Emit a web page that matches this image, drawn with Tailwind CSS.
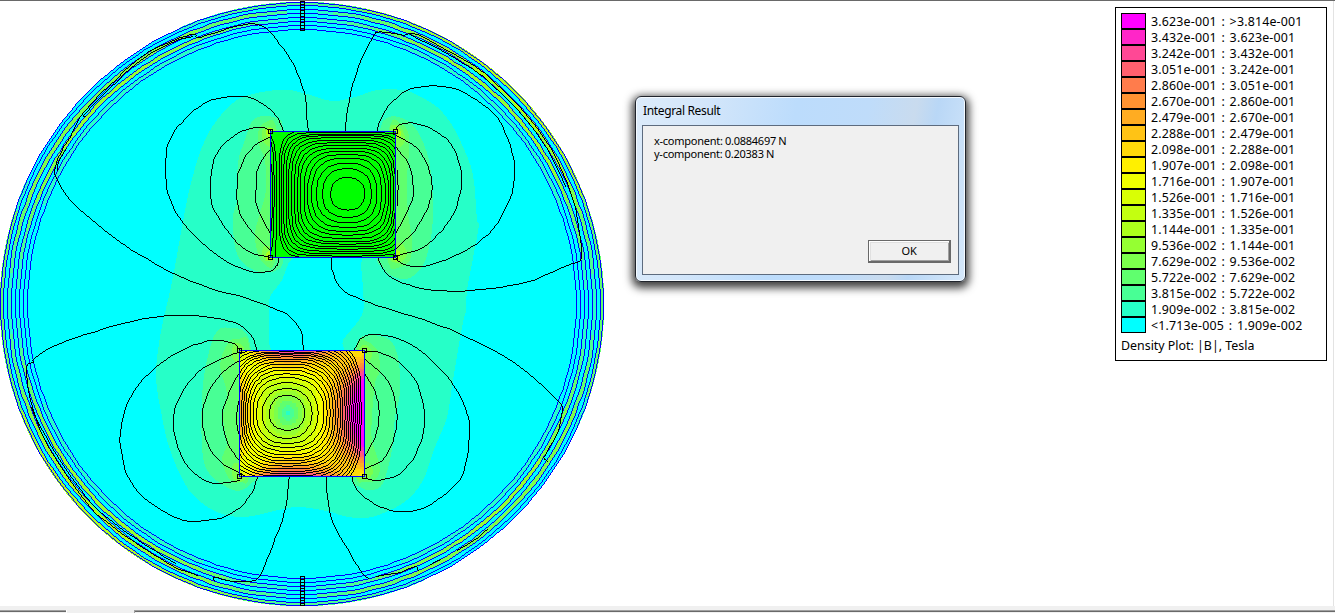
<!DOCTYPE html>
<html lang="en">
<head>
<meta charset="utf-8">
<title>Density Plot</title>
<script src="https://cdn.jsdelivr.net/npm/@tailwindcss/browser@4"></script>
</head>
<body class="bg-white text-black overflow-hidden">
<div class="flex flex-col w-[1335px] h-[613px] bg-white overflow-hidden">
  <div class="h-px bg-[#696969] shrink-0"></div>
  <main class="flex items-start h-[605px] shrink-0 border-r border-[#e3e3e3] mr-px">
    <svg id="plot" class="w-[605px] h-[605px] shrink-0" viewBox="0 1 605 605" fill="none">
      <defs>
        <clipPath id="clipTop"><rect x="271" y="132" width="125" height="125"/></clipPath>
        <clipPath id="clipBottom"><rect x="240" y="351" width="124" height="125"/></clipPath>
      </defs>
      <circle cx="302" cy="304" r="301.5" fill="#00ffff" shape-rendering="crispEdges"/>
      <g id="bands" stroke-width="4" shape-rendering="crispEdges"></g>
      <g id="density" shape-rendering="crispEdges"></g>
      <g id="rings" fill="#0000ff" shape-rendering="crispEdges"></g>
      <g id="field" fill="#000" shape-rendering="crispEdges"></g>
      <g id="magnetTop" clip-path="url(#clipTop)" shape-rendering="crispEdges"></g>
      <g id="magnetBottom" clip-path="url(#clipBottom)" shape-rendering="crispEdges"></g>
      <g stroke="#0000ff" shape-rendering="crispEdges">
        <rect x="270.5" y="131.5" width="125" height="126"/>
        <rect x="239.5" y="350.5" width="125" height="126"/>
      </g>
      <g id="nodes" stroke="#000" shape-rendering="crispEdges"></g>
    </svg>

    <section class="ml-[30px] mt-[95px] w-[331px] h-[186px] shrink-0 flex flex-col rounded-[6px] border border-[#20242c] bg-[linear-gradient(100deg,#dcebfa_0%,#d3e6fa_20%,#bcdcfc_45%,#bfdcfa_65%,#c9dbee_78%,#b9d7f6_84%,#d6e8fa_100%)] shadow-[inset_0_0_0_1px_#f4faff,0_3px_9px_3px_rgba(0,0,0,0.75)]">
      <h1 class="h-[28px] pl-[7px] pt-[5px] text-[12px] leading-[18px] font-['Noto_Sans',sans-serif] tracking-[-0.35px] whitespace-nowrap">Integral Result</h1>
      <div class="mx-[6px] h-[150px] border border-[#5d6b7e] bg-[#f0f0f0] flex flex-col justify-between text-[11px] leading-[13px] font-['Noto_Sans',sans-serif]">
        <div class="pl-[11px] pt-[8px] whitespace-nowrap tracking-[-0.26px] [word-spacing:-0.2px]">
          <p>x-component: 0.0884697 N</p>
          <p>y-component: 0.20383 N</p>
        </div>
        <button class="self-end mr-[7px] mb-[11px] w-[83px] h-[23px] border border-r-2 border-b-2 border-[#696969] bg-[#f0f0f0] shadow-[inset_1px_1px_0_#fff,inset_2px_2px_0_#e0e0e0,inset_-1px_-1px_0_#a0a0a0] leading-[18px] pb-px tracking-[-0.3px]">OK</button>
      </div>
    </section>

    <aside class="ml-auto mr-[6px] mt-[6px] w-[212px] h-[354px] shrink-0 border border-black bg-white pl-[5px] pt-[5px] text-[12.4px] font-['Noto_Sans',sans-serif]">
      <ul id="legend"></ul>
      <p class="leading-[16px] mt-[5px] whitespace-nowrap">Density Plot: |B|, Tesla</p>
    </aside>
  </main>
  <footer class="flex h-[7px] bg-[#f0f0f0] pt-[4px] shrink-0">
    <div class="w-[66px] h-[2px] border-t border-[#a0a0a0] bg-[#696969]"></div>
    <div class="w-px h-[3px] bg-white"></div>
    <div class="ml-[67px] flex-1 h-[3px] border-t border-l border-[#a0a0a0] bg-[#f0f0f0]"><div class="h-px bg-[#696969]"></div></div>
  </footer>
</div>
<script>
const PAL = ['#00ffff','#26ffc8','#48ff95','#60ff6e','#7cff4c','#95ff32','#acff1c','#c3ff10','#d9ff05','#f0ff00','#fff000','#ffd90a','#ffc315','#ffac22','#ff9332','#ff7c4c','#ff606e','#ff4895','#ff26c8','#ff00ff'];
const el = id => document.getElementById(id);

// Legend rows, highest level first
const V = ['>3.814e-001','3.623e-001','3.432e-001','3.242e-001','3.051e-001','2.860e-001','2.670e-001','2.479e-001','2.288e-001','2.098e-001','1.907e-001','1.716e-001','1.526e-001','1.335e-001','1.144e-001','9.536e-002','7.629e-002','5.722e-002','3.815e-002','1.909e-002','<1.713e-005'];
el('legend').innerHTML = V.slice(1).map((v, i) =>
  `<li class="flex h-4 items-center"><span class="w-[25px] h-4 border border-black" style="background:${PAL[19 - i]}"></span><span class="ml-[5px] pt-[2px] leading-4 whitespace-nowrap tracking-[0.18px] [word-spacing:1.3px]">${v} : ${V[i]}</span></li>`).join('');

// One-pixel-wide aliased polyline
function trace(pts) {
  const seen = new Set(); let d = '';
  for (let i = 0; i < pts.length - 1; i++) {
    let [x, y] = pts[i].map(Math.round); const [X, Y] = pts[i + 1].map(Math.round);
    const dx = Math.abs(X - x), dy = -Math.abs(Y - y), sx = x < X ? 1 : -1, sy = y < Y ? 1 : -1;
    let e = dx + dy;
    for (;;) {
      const k = x + ',' + y;
      if (!seen.has(k)) { seen.add(k); d += `M${k}h1v1h-1z`; }
      if (x === X && y === Y) break;
      const f = 2 * e;
      if (f >= dy) { e += dy; x += sx; }
      if (f <= dx) { e += dx; y += sy; }
    }
  }
  return `<path d="${d}"/>`;
}

// Shield bands: level depends on the angle
const R = [302, 299, 295, 291, 287, 283, 279, 275];
const pt = (r, a) => [302 + r * Math.cos(a), 304 - r * Math.sin(a)];
let s = '';
for (let b = 0; b < 7; b++) {
  for (let d = 0; d < 360; d += 3) {
    const a = d * Math.PI / 180, q = Math.abs(Math.sin(2 * (a + 0.03)));
    const tr = Math.sin(2 * a) > 0, side = Math.abs(Math.cos(a)) > 0.94;
    let l = 0;
    if (b === 0) l = side ? 3 : tr ? 2 + 4.5 * q : (q < 0.5 ? 2 : q < 0.75 ? 1 : 0);
    if (b === 2) l = tr ? 6.2 * Math.pow(q, 0.8) : 5 * Math.sqrt(q);
    if (b === 4) l = (tr ? 6 : 5.6) * Math.pow(q, 0.8) - 0.2;
    if (b === 6) l = q > 0.7 ? 1 : 0;
    l = Math.floor(Math.max(0, l));
    if (!l) continue;
    const r = (R[b] + R[b + 1]) / 2 - 0.2, p = pt(r, a - 0.001), e = pt(r, a + 0.0535);
    s += `<path d="M${p}A${r} ${r} 0 0 0 ${e}" stroke="${PAL[l]}"/>`;
  }
}
el('bands').innerHTML = s;
el('rings').innerHTML = R.map(r => {
  const p = [];
  for (let d = 0; d <= 360; d += 2) { const a = pt(r - 0.5, d * Math.PI / 180); p.push([a[0] - 0.5, a[1] - 0.5]); }
  return trace(p);
}).join('');

// Smooth point list through control points
function curve(t, closed) {
  const n = t.split(' ').map(p => p.split(',').map(Number)), N = n.length, out = [];
  const g = i => closed ? n[(i + N) % N] : n[Math.max(0, Math.min(N - 1, i))];
  for (let i = 0; i < (closed ? N : N - 1); i++) {
    const a = g(i - 1), b = g(i), c = g(i + 1), e = g(i + 2);
    for (let j = 0; j < 4; j++) {
      const u = j / 4;
      out.push([0, 1].map(k => 0.5 * (2 * b[k] + (c[k] - a[k]) * u + (2 * a[k] - 5 * b[k] + 4 * c[k] - e[k]) * u * u + (3 * b[k] - a[k] - 3 * c[k] + e[k]) * u * u * u)));
    }
  }
  out.push(closed ? n[0] : n[N - 1]);
  return out;
}
const line = t => trace(curve(t, false).map(p => [p[0] - 0.4, p[1] - 0.3]));

const AREAS = [
 [1,'277,90 290,90 307,94 332,101 355,97 377,90 403,90 417,95 437,107 452,125 463,147 473,175 477,220 479,225 473,258 467,290 466,310 462,327 453,380 447,417 435,447 422,482 403,503 372,517 348,517 327,511 300,507 283,509 245,517 217,512 195,497 183,480 170,450 162,417 156,377 160,337 168,300 173,277 182,227 190,187 202,147 217,120 237,100 257,93'],
 [0,'293,258 282,280 270,297 269,310 269,330 273,352 305,360 342,352 343,340 362,315 363,290 361,267 359,256 325,250'],
 [2,'267,116 253,120 245,140 238,163 237,200 233,217 235,247 243,263 260,272 277,270 284,257 290,200 283,130 280,120'],
 [2,'380,130 387,118 398,117 413,125 425,147 431,173 433,213 430,243 422,267 407,279 390,275 383,267 376,256 370,190'],
 [2,'233,328 217,331 207,360 202,397 202,447 207,470 220,483 238,491 253,482 258,470 260,420 251,350 245,332'],
 [2,'355,352 360,338 372,335 390,340 398,357 400,380 399,400 395,417 392,450 383,483 372,490 360,487 350,475 340,410'],
 [3,'264,123 258,133 260,148 265,160 266,190 260,213 255,233 257,250 263,263 275,262 280,190 276,126'],
 [3,'390,125 400,123 408,132 409,150 407,180 408,213 412,240 410,260 400,267 388,262 380,190'],
 [3,'238,339 228,343 220,366 227,393 223,417 227,443 222,460 230,480 240,482 250,470 250,350'],
 [3,'358,343 366,341 377,350 380,370 375,383 372,417 372,440 380,467 375,480 365,482 355,474 350,400'],
 [4,'264,128 262,137 266,145 274,146 276,130'],[4,'264,246 263,258 270,261 277,250'],
 [4,'390,127 399,126 405,137 402,146 393,145'],[4,'391,245 402,244 407,255 399,263 388,258'],
 [4,'234,344 232,356 237,363 244,360 243,346'],[4,'234,463 232,474 236,481 245,480 244,466'],
 [4,'360,347 368,346 372,355 366,364 358,360'],[4,'358,464 368,463 373,472 367,479 356,478'],
 [6,'267,129 267,136 273,136 273,129'],[6,'267,252 266,259 273,260 273,252'],
 [6,'394,128 400,130 400,137 393,137'],[6,'394,250 400,252 399,260 392,259'],
];
el('density').innerHTML = AREAS.map(([l, t]) => `<polygon points="${curve(t, true).join(' ')}" fill="${PAL[l]}"/>`).join('');

const LINES = [
 '308,131 305,97 300,80 293,63 283,48 270,32 260,25 245,24 222,30 200,37 196,37 194,34 173,40 143,55 117,78 85,110 70,137 62,150 55,167 57,180 70,200 90,218 115,238 137,253 173,273 210,288 247,298 278,310 288,315 297,325 302,335 303,350',
 '192,36 172,42 143,58 118,80 86,112 85,116','66,148 58,163 57,170',
 '283,131 278,118 267,107 252,98 240,96 218,98 198,107 182,122 171,137 166,155 166,182 171,202 183,223 207,247 233,265 255,272 270,271 277,265 278,258',
 '270,130 260,127 247,129 230,138 217,153 211,172 211,202 220,220 233,238 250,252 270,257',
 '270,136 250,150 239,170 237,187 238,207 248,227 270,250',
 '270,149 258,167 256,187 257,207 270,233',
 '345,131 349,100 357,70 363,55 372,38 377,32 393,33 403,35 417,34 443,48 470,63 490,78 513,100 533,123 550,147 567,183 575,207 579,233 581,258 567,265 533,280 500,287 460,291 427,289 403,283 388,275 380,263 378,258',
 '410,34 441,50 468,66 488,81 511,103 531,126 548,150 565,186',
 '377,131 382,115 397,97 417,87 450,87 477,100 497,117 508,140 514,163 512,192 497,223 477,243 447,259 423,266 403,264 396,258',
 '396,128 400,124 415,123 432,129 450,143 460,167 461,187 455,210 442,230 423,247 396,256',
 '396,135 417,148 428,167 432,187 428,207 415,230 396,248',
 '396,147 408,163 412,177 412,200 396,232','397,170 398,187 397,205',
 '331,258 333,273 343,290 363,300 393,310 433,323 463,335 497,352 527,372 557,400 562,410 557,433 545,455 544,458 547,461',
 '487,529 478,537 457,550','440,559 430,564','418,570 415,566 400,572 376,576','368,578 360,570 347,548 335,527 328,503 326,477',
 '354,350 357,343 363,337 373,334 397,338 417,348 433,362 450,380 463,403 469,423 468,450 462,475 447,492 427,506 410,511 390,510 373,503 360,493 353,482 352,477',
 '364,351 380,352 400,363 417,383 424,413 422,437 412,460 397,475 378,480 364,478',
 '364,358 383,375 393,393 397,417 393,440 382,460 364,469',
 '364,373 375,392 379,413 375,437 364,457',
 '257,350 253,338 240,325 217,318 187,315 160,316 127,322 93,332 60,343 35,357 33,362 27,365 27,380 31,403 43,437 63,470 90,507 117,530 147,550 173,566 197,575',
 '31,407 45,435 65,468 92,504 119,527 149,547 175,563',
 '214,580 215,577 232,581 250,581 260,575 273,543 282,520 287,497 289,477',
 '239,349 233,343 217,340 200,343 177,352 150,372 130,397 120,433 122,457 128,477 143,497 167,513 190,521 220,518 240,507 253,490 257,477',
 '239,352 213,362 193,377 178,400 173,423 180,453 193,472 213,483 239,480',
 '239,360 217,378 205,400 202,420 208,445 222,463 239,472',
 '239,373 227,397 222,417 227,442 239,460',
 '239,400 237,410 237,427 239,435',
];
el('field').innerHTML = LINES.map(line).join('');

// Closed loop with separate extents on each side, e sets how square it is
function loop(cx, cy, l, r, t, b, e) {
  const p = [];
  for (let i = 0; i <= 60; i++) {
    const a = i * Math.PI / 30, c = Math.cos(a), n = Math.sin(a);
    const x = Math.sign(c) * Math.pow(Math.abs(c), 2 / e), y = Math.sign(n) * Math.pow(Math.abs(n), 2 / e);
    p.push([cx + x * (x < 0 ? l : r), cy + y * (y < 0 ? t : b)]);
  }
  return trace(p);
}
const at = (a, k, step) => k < a.length ? a[k] : a[a.length - 1] + step * (k - a.length + 1);

// Upper magnet
let m = '<rect x="270" y="131" width="127" height="127" fill="#00ff00"/><g fill="#000">';
const TL = [212,188,170,155,143,132,120,112,103,94,86,78,71,64,57], TR = [313,333,350,364,375,384,392,399,405,411], TT = [172,146,130,115,104,93,84,76,68,60,53,47,42], TB = [270,292,308,322,334,345,355,365,372,380,387,394,401,408];
for (let k = 0; k < 15; k++) m += loop(347, 193.5, (262 - at(TL, k, -6)) / 3, (at(TR, k, 8) - 262) / 3, (222 - at(TT, k, -6)) / 3, (at(TB, k, 7) - 222) / 3, 2.3 + k * 0.12 + k * k * 0.012);
m += ['270,132 274,146 276,165 276,235 275,257','270,138 273,155 274,190 273,235 271,250','270,160 272,175 272,215 271,230'].map(line).join('') + '</g>';
el('magnetTop').innerHTML = m;

// Lower magnet: density in 2px rows, equal cells merged
m = '';
for (let y = 351; y < 477; y += 2) {
  let x0 = 240, last = -1;
  for (let x = 240; x <= 366; x += 2) {
    const dx = x - 287, dy = y - 412, w = dx < 0 ? 48 : 77, ax = Math.abs(dx), ay = Math.abs(dy);
    const bx = (dx > 0 ? 0.25 * ax + 3 * (ax / 75) ** 4 : 0.24 * ax + (ax / 48) ** 4) * (1 - 0.7 * Math.abs(dy / 63) ** 2);
    const by = (0.2 * ay + 4 * (ay / 61) ** 6) * (1 - 0.68 * Math.abs(dx / w) ** 1.7);
    const v = x > 364 ? -2 : Math.min(19, Math.round(1 + Math.hypot(bx, by)));
    if (v !== last) { if (last >= 0) m += `<rect x="${x0}" y="${y}" width="${x - x0}" height="2" fill="${PAL[last]}"/>`; x0 = x; last = v; }
  }
}
m += '<g fill="#000">';
const BL = [134,113,96,85,76,69,62,56,50], BR = [240,262,280,297,307,316,325,333,340,347,354,361,367,373,379,385,391,397,403,409], BT = [168,148,130,115,103,92,83,74,66,59,52,46,41,37], BB = [272,296,312,324,335,346,356,364,372,380,388,396,402];
for (let k = 0; k < 20; k++) m += loop(286.5, 413, (187 - at(BL, k, -8)) / 3, (BR[k] - 187) / 3, (222 - at(BT, k, -7)) / 3, (at(BB, k, 7) - 222) / 3, 2.15 + k * 0.09);
el('magnetBottom').innerHTML = m + '</g>';

// Node markers and the boundary ladders
let n = [[270,131],[395,131],[270,257],[395,257],[239,350],[364,350],[239,476],[364,476]].map(([x, y]) => `<rect x="${x - 1.5}" y="${y - 1.5}" width="4" height="4"/>`).join('');
for (const y0 of [1, 576]) {
  n += `<rect x="300.5" y="${y0 + .5}" width="4" height="29"/>`;
  for (let i = 3; i < 29; i += 3) n += `<path d="M300 ${y0 + i + .5}h5"/>`;
}
el('nodes').innerHTML = n;
</script>
</body>
</html>
